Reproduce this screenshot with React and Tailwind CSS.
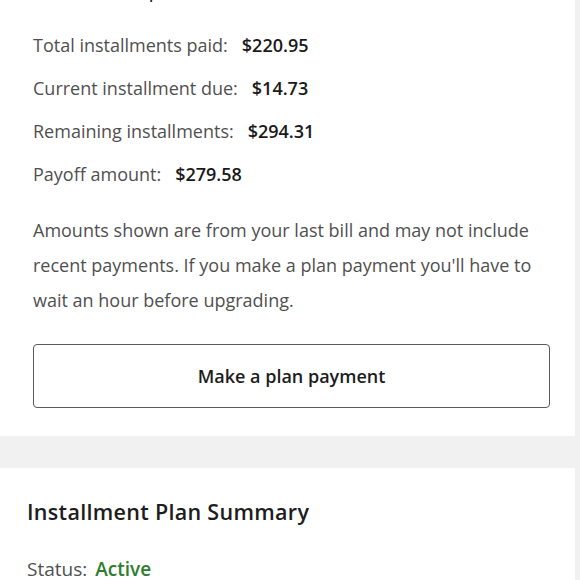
import React from 'react'

const rows = [
  { label: 'Total installments paid:', value: '$220.95' },
  { label: 'Current installment due:', value: '$14.73' },
  { label: 'Remaining installments:', value: '$294.31' },
  { label: 'Payoff amount:', value: '$279.58' },
]

function App() {
  return (
    <div className="flex w-[580px] h-[580px] overflow-hidden bg-[#f1f1f1] font-['Open_Sans',sans-serif]">
      <div className="flex flex-col w-[575px]">
        <section className="shrink-0 bg-white px-[33px] pb-[28px]">
          <h2 className="-mt-[24px] h-[26px] text-[21px] leading-[26px] text-[#1d1d1d] font-medium">
            Installment plan details
          </h2>
          <div className="flex flex-col gap-[21px] pt-[32px]">
            {rows.map((row) => (
              <div key={row.label} className="flex items-center h-[22px] text-[18px]">
                <span className="text-[#505050]">{row.label}</span>
                <span className="ml-[14px] font-semibold text-[#1a1a1a]">{row.value}</span>
              </div>
            ))}
          </div>
          <p className="mt-[28px] text-[18px] leading-[35px] text-[#505050]">
            Amounts shown are from your last bill and may not include recent payments. If you make a plan
            payment you'll have to wait an hour before upgrading.
          </p>
          <button
            type="button"
            className="mt-[26px] w-[517px] h-[64px] rounded-[4px] border border-[#5a5a5a] bg-white text-[18px] font-semibold text-[#1d1d1d]"
          >
            Make a plan payment
          </button>
        </section>
        <div className="shrink-0 h-[32px] bg-[#f1f1f1]" />
        <section className="shrink-0 flex-1 bg-white px-[27px] pt-[30px]">
          <h3 className="text-[21.5px] leading-[28px] font-semibold tracking-[0.3px] text-[#1d1d1d]">
            Installment Plan Summary
          </h3>
          <div className="mt-[32px] flex items-center text-[19px] leading-[22px]">
            <span className="text-[#505050]">Status:</span>
            <span className="ml-[8px] font-semibold text-[#2d7d2d]">Active</span>
          </div>
        </section>
      </div>
    </div>
  )
}

export default App
